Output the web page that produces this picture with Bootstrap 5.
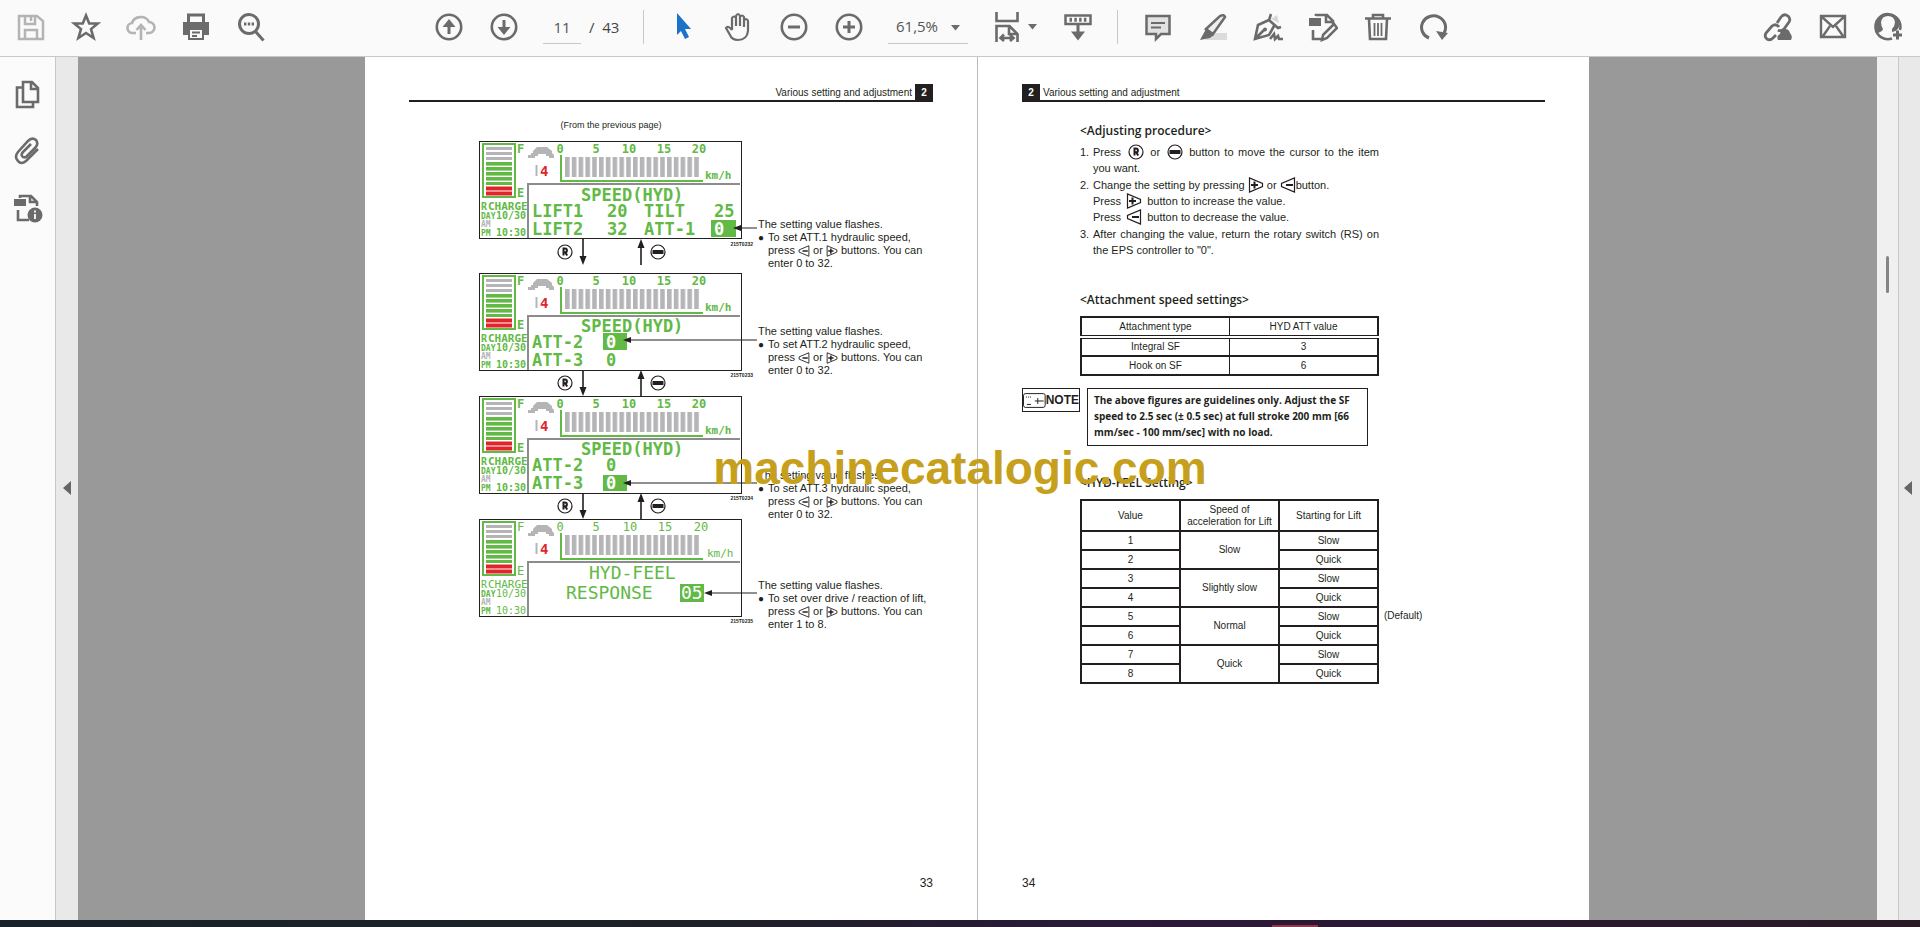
<!DOCTYPE html>
<html lang="en">
<head>
<meta charset="utf-8">
<meta name="viewport" content="width=device-width, initial-scale=1">
<title>Document viewer</title>
<link href="https://cdn.jsdelivr.net/npm/bootstrap@5.3.0/dist/css/bootstrap.min.css" rel="stylesheet">
<script src="https://cdn.jsdelivr.net/npm/bootstrap@5.3.0/dist/js/bootstrap.bundle.min.js"></script>
<style>
  :root { --ink: #231f20; --icon: #6b6b6b; --lcd: #62b946; --line: #c8c8c8; }
  body { font-family: "Liberation Sans", Arial, sans-serif; color: var(--ink); background: #fafafa; }
  .toolbar { height: 57px; background: #fafafa; border-bottom: 1px solid var(--line); padding: 0 5px 2px 3px; font-family: "Open Sans", "Noto Sans", sans-serif; font-size: 15px; color: #444; }
  .tool { width: 55px; height: 44px; padding: 0; border: 0; background: none; color: var(--icon); display: flex; align-items: center; justify-content: center; }
  .tool svg, .rail-btn svg { width: 30px; height: 30px; fill: none; stroke: currentColor; stroke-width: 3; }
  .tool.muted { color: #b4b4b4; }
  .tool.active { color: #1b72c8; }
  .tool.wide { gap: 6px; width: 60px; margin: 0 6px 0 4px; }
  .tool .caret, .zoom-box .caret { width: 9px; height: 6px; fill: var(--icon); stroke: none; }
  .middle-tools { margin-left: 143px; }
  .page-input { width: 38px; height: 34px; border: 0; border-bottom: 1px solid var(--line); background: none; text-align: center; color: #555; padding: 0; border-radius: 0; margin-left: 12px; }
  .page-total { width: 50px; }
  .bar-sep { width: 1px; height: 34px; background: var(--line); margin: 0 12px; }
  .zoom-box { width: 80px; height: 34px; border-bottom: 1px solid var(--line); margin: 0 12px; position: relative; }
  .zoom-box select { appearance: none; width: 100%; height: 100%; border: 0; background: none; padding: 0 0 0 8px; color: #555; }
  .zoom-box .caret { position: absolute; right: 8px; top: 15px; pointer-events: none; }
  .rail { width: 56px; border-right: 1px solid var(--line); background: #fbfbfb; padding-top: 8px; }
  .rail-btn { width: 55px; height: 57px; border: 0; padding: 0; background: none; color: var(--icon); }
  .strip { background: #e9e9e9; width: 22px; }
  .strip button { border: 0; padding: 0; background: none; width: 100%; height: 22px; display: flex; justify-content: center; align-items: center; margin-bottom: 2px; }
  .strip-end { border-left: 1px solid var(--line); padding-right: 3px; }
  .desk { background: #999; padding-right: 1px; }
  .sheet { width: 35%; max-width: 612px; background: #fff; padding: 26px 44px 30px; }
  .sheet + .sheet { border-left: 1px solid #bbb; }
  .sheet-head { border-bottom: 2px solid var(--ink); height: 19px; font-size: 10px; line-height: 12px; gap: 3px; }
  .sheet-head span { padding-top: 2px; }
  .sheet-head b { background: var(--ink); color: #fff; width: 18px; height: 16px; line-height: 17px; text-align: center; }
  .folio { font-size: 12px; line-height: 14px; }
  .from-prev { font-size: 9px; line-height: 12px; width: 264px; margin: 17px 0 10px 70px; }
  .flow-fig { margin-left: 70px; }
  .flow-fig > svg { width: 278px; height: 486px; display: block; }
  .callouts { margin-left: 1px; padding-top: 77px; font-size: 11px; line-height: 13px; white-space: nowrap; width: 0; }
  .callouts p { margin: 0; }
  .callouts ul { list-style: none; padding: 0 0 0 10px; margin: 0; }
  .callouts li::before { content: "●"; float: left; margin-left: -10px; font-size: 10px; }
  .callouts svg { width: 12px; height: 12px; vertical-align: -3px; }
  .call-2 { margin-top: 55px; }
  .call-3 { margin-top: 92px; }
  .call-4 { margin-top: 58px; }
  .lcd text { font-family: "DejaVu Sans Mono", monospace; fill: var(--lcd); }
  .t17 { font-size: 17px; font-weight: bold; }
  .t18 { font-size: 18px; }
  .t12 { font-size: 12px; font-weight: bold; }
  .t14 { font-size: 14px; font-weight: bold; }
  .t11 { font-size: 11px; font-weight: bold; }
  .t10 { font-size: 10px; font-weight: bold; }
  .t8 { font-size: 8px; font-weight: bold; }
  .light-lcd .t12, .light-lcd .t11, .light-lcd .t10 { font-weight: normal; }
  .lcd .red { fill: #e0252b; }
  .lcd .grey { fill: #b5b5b8; }
  .lcd .inv { fill: #fff; }
  .lcd .code { font: bold 5px "Liberation Sans", Arial, sans-serif; fill: var(--ink); text-anchor: end; }
  .content { margin-left: 58px; width: 299px; }
  .content h2 { font-family: "Open Sans", "Noto Sans", sans-serif; font-weight: 600; font-size: 12px; line-height: 16px; margin: 0; white-space: nowrap; }
  .content .h-first { margin-top: 21px; }
  .content .h-second { margin-top: 34px; }
  .content .h-third { margin-top: 29px; }
  .steps { list-style: none; padding: 0; margin: 5px 0 0; font-size: 11px; line-height: 16px; }
  .steps li { display: flex; text-align: justify; }
  .steps li + li { margin-top: 1px; }
  .steps li > span { flex: 0 0 13px; }
  .steps svg { width: 16px; height: 16px; vertical-align: -4px; margin: 0 2px; }
  .grid-table { border-collapse: collapse; width: 299px; font-size: 10px; line-height: 12px; text-align: center; table-layout: fixed; border: 2px solid var(--ink); color: var(--ink); margin-top: 8px; }
  .grid-table th, .grid-table td { border: 2px solid var(--ink); font-weight: normal; padding: 0; height: 19px; }
  .attach th, .attach td { border-left-width: 1px; border-right-width: 1px; }
  .attach thead th { border-bottom: 4px double var(--ink); height: 20px; }
  .feel thead th { height: 31px; }
  .note-row { margin-top: 12px; gap: 7px; }
  .note-tag { border: 1px solid var(--ink); width: 58px; height: 24px; }
  .note-tag svg { width: 23px; height: 15px; }
  .note-tag b { font: bold 12px "Liberation Sans Narrow", "Liberation Sans", sans-serif; }
  .note-box { border: 1px solid var(--ink); width: 281px; height: 58px; padding: 3px 6px; font: bold 10px/16px "Open Sans", "Noto Sans", sans-serif; white-space: nowrap; }
  .default-tag { position: absolute; left: 304px; top: 111px; font-size: 10px; line-height: 12px; }
  .watermark { z-index: 5; top: 441px; font-weight: bold; font-size: 46px; line-height: 54px; color: #c6a01c; white-space: nowrap; }
  .scroller { width: 21px; background: #f0f0f0; padding-top: 199px; }
  .scroller div { width: 3px; height: 37px; background: #858585; border-radius: 2px; }
  .taskbar { height: 7px; background: linear-gradient(90deg, #18222a 0, #1d2127 35%, #2b1838 60%, #2a1a26 100%); }
  .taskbar i { width: 46px; height: 2px; margin-right: 602px; background: #8c3a4c; }
</style>
</head>
<body class="d-flex flex-column vh-100 overflow-hidden">

<svg width="0" height="0" class="position-absolute" aria-hidden="true">
  <defs>
    <pattern id="segs" width="6.8" height="20" x="86" y="16" patternUnits="userSpaceOnUse"><rect width="4.6" height="20" fill="#b5b5b8"/></pattern>
    <symbol id="lcdbase" overflow="visible">
      <rect x=".5" y=".5" width="262" height="97" fill="#fff" stroke="#231f20"/>
      <rect x="4" y="3" width="32" height="53" fill="#fff" stroke="#62b946" stroke-width="2"/>
      <g fill="#b5b5b8"><rect x="7" y="6" width="26" height="3"/><rect x="7" y="11" width="26" height="3"/><rect x="7" y="16" width="26" height="3"/></g>
      <g fill="#62b946"><rect x="7" y="21" width="26" height="3.6"/><rect x="7" y="26" width="26" height="3.6"/><rect x="7" y="31" width="26" height="3.6"/><rect x="7" y="36" width="26" height="3.6"/><rect x="7" y="41" width="26" height="3"/></g>
      <g fill="#e0252b"><rect x="7" y="45.500" width="26" height="4"/><rect x="7" y="50.500" width="26" height="4"/></g>
      <path d="M54 10l4-4h10l5 4v2l2 2v3h-5v-2h-3v-2h-8v2h-3v2h-7v-3h3v-2h2z" fill="#b5b5b8"/>
      <path d="M57.500 24v11" stroke="#b5b5b8" stroke-width="2"/>
      <rect x="86" y="16" width="135" height="20" fill="url(#segs)"/>
      <path d="M82 14v26h142" fill="none" stroke="#62b946" stroke-width="2"/>
      <path d="M49 97V43h212" fill="none" stroke="#8c8c8c" stroke-width="2"/>
    </symbol>
    <symbol id="minuskey" viewBox="0 0 16 16"><path d="M14.500 1v14L1.500 9.500v-3z" fill="none" stroke="#231f20" stroke-width="1.200"/><path d="M6 8h7" stroke="#231f20" stroke-width="2"/></symbol>
    <symbol id="pluskey" viewBox="0 0 16 16"><path d="M1.500 1v14L14.500 9.500v-3z" fill="none" stroke="#231f20" stroke-width="1.200"/><path d="M3 8h7M6.500 4.500v7" stroke="#231f20" stroke-width="2"/></symbol>
    <symbol id="rkey" viewBox="0 0 16 16"><circle cx="8" cy="8" r="7" fill="#fff" stroke="#231f20" stroke-width="1.200"/><path d="M6.500 11.500v-7H8a1.800 1.800 0 0 1 0 3.800H6.500M8 8l2.200 3.500" fill="none" stroke="#231f20" stroke-width="2"/></symbol>
    <symbol id="modekey" viewBox="0 0 16 16"><circle cx="8" cy="8" r="7" fill="#fff" stroke="#231f20" stroke-width="1.200"/><path d="M2.500 8h11" stroke="#231f20" stroke-width="4"/></symbol>
    <symbol id="link-arrows" overflow="visible">
      <path d="M104 0v20M162 26V5" stroke="#231f20" stroke-width="1.600"/>
      <path d="M100.500 17h7l-3.500 9zM158.500 9h7L162 0z" fill="#231f20"/>
      <use href="#rkey" x="78" y="5" width="16" height="16"/><use href="#modekey" x="171" y="5" width="16" height="16"/>
    </symbol>
    <symbol id="caret" viewBox="0 0 9 6"><path d="M0 0h9L4.500 5.500z"/></symbol>
  </defs>
</svg>

<header class="toolbar d-flex align-items-center">
  <button class="tool muted" aria-label="Save"><svg viewBox="0 0 30 30"><path d="M3 4h18l6 5v18H3zM9 4v8h10V4M15 5v4M9 27v-9h12v9" stroke-width="2.500"/></svg></button>
  <button class="tool" aria-label="Star"><svg viewBox="0 0 30 30"><path d="M15 3.500l3.200 8h8.600l-6.800 5.600 2.600 8.900L15 21l-7.600 5 2.600-8.900-6.800-5.600h8.600z" stroke-width="2.600"/></svg></button>
  <button class="tool muted" aria-label="Upload"><svg viewBox="0 0 30 30"><path d="M10 21H7a5 5 0 0 1-1-10 9 8 0 0 1 17-1 5.500 5.500 0 0 1 0 11h-3M15 28V14M10.500 18l4.500-5 4.500 5" stroke-width="2.600"/></svg></button>
  <button class="tool" aria-label="Print"><svg viewBox="0 0 30 30"><path d="M7.500 10V3h15v7"/><path d="M3 11h24v11h-4v-5H7v5H3z" fill="currentColor" stroke-width="2"/><path d="M8 17h14v10H8zM11 20.500h8M11 24h5" fill="#fafafa" stroke-width="2"/></svg></button>
  <button class="tool" aria-label="Find"><svg viewBox="0 0 30 30"><circle cx="13" cy="12" r="9.500"/><path d="M19.500 19.500l8 9"/><path d="M8 12h10" stroke-dasharray="2.400 1.400"/></svg></button>

  <div class="middle-tools d-flex align-items-center">
    <button class="tool" aria-label="Previous page"><svg viewBox="0 0 30 30"><circle cx="15" cy="15" r="12.200" stroke-width="2.600"/><path d="M15 22V10"/><path d="M8.500 15L15 7l6.500 8z" fill="currentColor" stroke="none"/></svg></button>
    <button class="tool" aria-label="Next page"><svg viewBox="0 0 30 30"><circle cx="15" cy="15" r="12.200" stroke-width="2.600"/><path d="M15 8v12"/><path d="M8.500 15L15 23l6.500-8z" fill="currentColor" stroke="none"/></svg></button>
    <input class="page-input" type="text" value="11" aria-label="Page number">
    <span class="page-total ps-2">/&nbsp; 43</span>
    <span class="bar-sep"></span>
    <button class="tool active" aria-label="Select"><svg viewBox="0 0 30 30"><path d="M8 1l14 16h-6l4 8-4 2-4-8-4 4z" fill="currentColor" stroke="none"/></svg></button>
    <button class="tool" aria-label="Hand"><svg viewBox="0 0 30 30"><path d="M8 18V6q2-3 4 0v8M12 14V4q2-4 4 0v10M16 14V5q2-3 4 0v10M20 15V8q3-2 4 1v10q-1 9-10 9-6 0-8-5l-4-7q2-3 6 2" stroke-width="2.200"/></svg></button>
    <button class="tool" aria-label="Zoom out"><svg viewBox="0 0 30 30"><circle cx="15" cy="15" r="12.200" stroke-width="2.600"/><path d="M9 15h12"/></svg></button>
    <button class="tool" aria-label="Zoom in"><svg viewBox="0 0 30 30"><circle cx="15" cy="15" r="12.200" stroke-width="2.600"/><path d="M9 15h12M15 9v12"/></svg></button>
    <span class="zoom-box"><select aria-label="Zoom level"><option>61,5%</option></select><svg class="caret"><use href="#caret"/></svg></span>
    <button class="tool wide" aria-label="Fit width"><svg viewBox="0 0 30 30"><path d="M4.500 0v9h21V0M4.500 30V14h13l8 8v8M17 14v8h8M9 26h12M12 22.500L8.500 26l3.500 3M18 23l3.500 3-3.500 3" stroke-width="2.600"/></svg><svg class="caret"><use href="#caret"/></svg></button>
    <button class="tool" aria-label="Scrolling pages"><svg viewBox="0 0 30 30"><rect x="2.500" y="3.500" width="25" height="8.500" stroke-width="2.500"/><path d="M6.500 7.800h17" stroke-dasharray="2.500 2.300" stroke-width="4"/><path d="M15 13v9"/><path d="M8 19.500l7 9 7-9z" fill="currentColor" stroke="none"/></svg></button>
    <span class="bar-sep"></span>
    <button class="tool" aria-label="Comment"><svg viewBox="0 0 30 30"><path d="M3.500 4h23v18H18l-5 5v-5H3.500z" fill="#e2e2e2" stroke-width="2.500"/><path d="M8 11h14M8 15.500h10" stroke-width="2"/></svg></button>
    <button class="tool" aria-label="Highlight"><svg viewBox="0 0 30 30"><path d="M10 21h19v7H7z" fill="#dcdcdc" stroke="none"/><path d="M8 17L22 4q4-2 5 1l-12 17z" fill="#eee" stroke-width="2.500"/><path d="M8 17l8 6-4 3-10 2z" fill="currentColor" stroke="none"/></svg></button>
    <button class="tool" aria-label="Sign"><svg viewBox="0 0 30 30"><path d="M18 7l6-4 2 8z" fill="#d8d8d8" stroke="none"/><path d="M18 2l-2 6 9 8 3-1M16 8L5 13 2 27l14-4 5-9M3 26l8-8" stroke-width="2.600"/><circle cx="12" cy="17.500" r="2" fill="currentColor" stroke="none"/><path d="M17 27l4-5 1 5 3-3 1 3h4" stroke-width="2.600"/></svg></button>
    <button class="tool" aria-label="Fill and stamp"><svg viewBox="0 0 30 30"><path d="M8 4V3h11l6 6v3M18 3v7h6M5 18v9h9" stroke-width="2.600"/><path d="M1 6h12v8H1z" fill="currentColor" stroke="none"/><path d="M15 23L26 12l3 4-10 10-5 2z" stroke-width="2.500"/></svg></button>
    <button class="tool" aria-label="Delete"><svg viewBox="0 0 30 30"><path d="M2 6.500h26M10 6V3h10v3M6 7l1 20h16l1-20" stroke-width="2.600"/><path d="M11.500 11v13M15 11v13M18.500 11v13" stroke-width="1.800"/></svg></button>
    <button class="tool" aria-label="Rotate"><svg viewBox="0 0 30 30"><path d="M11 26A12 11.500 0 1 1 26 21"/><path d="M18 19l12 2-6 7z" fill="currentColor" stroke="none"/></svg></button>
  </div>

  <div class="ms-auto d-flex">
    <button class="tool" aria-label="Share link"><svg viewBox="0 0 30 30"><path d="M14 11l4-6q3-4 7-1 3 3 1 6l-5 7q-3 3-6 1M16 15q-3-4-7-1l-6 7q-2 4 1 6 3 2 6-1l3-3" stroke-width="2.800"/><path d="M15 28q-2-4 2-6 1-5 5-5 4 0 5 4 3 3 1 7z" fill="currentColor" stroke="none"/></svg></button>
    <button class="tool" aria-label="Mail"><svg viewBox="0 0 30 30"><path d="M3 4h24v21H3zM4 5l11 10L26 5M5 24l7-10M25 24l-7-10" stroke-width="2.400"/></svg></button>
    <button class="tool" aria-label="Account"><svg viewBox="0 0 30 30"><path d="M19 26.500A12.500 12.500 0 1 1 27 18" stroke-width="2.600"/><path d="M4 21q5-1 6-4-2-3-2-7 1-6 7-6t7 6q0 4-3 7v3q8-1 7-9 0-8-11-9Q3 3 3 14z" fill="currentColor" stroke="none"/><path d="M24.500 18.500v9M20 23h9"/></svg></button>
  </div>
</header>

<div class="d-flex flex-grow-1 overflow-hidden">
  <nav class="rail flex-shrink-0" aria-label="Panels">
    <button class="rail-btn" aria-label="Page thumbnails"><svg viewBox="0 0 30 30"><path d="M10 3h9l6 6v14H10zM18 3v7h7M9 8.500H4V28h16v-4" stroke-width="2.600"/></svg></button>
    <button class="rail-btn" aria-label="Attachments"><svg viewBox="0 0 30 30"><path d="M25 13L13 25q-5 4-8 0-4-4 0-9L15 5q4-4 8-1 3 4-1 8l-9 9q-3 1-4-1-1-2 1-4l8-8" stroke-width="2.600"/></svg></button>
    <button class="rail-btn" aria-label="Document info"><svg viewBox="0 0 30 30"><path d="M7 5V3h11l6 6v4M17 3v6h6M5 17v10h11" stroke-width="2.600"/><path d="M1 6h12v7H1z" fill="currentColor" stroke="none"/><circle cx="22" cy="22" r="7.500" fill="currentColor" stroke="none"/><path d="M22 21v5M22 17.500v2" stroke="#fff" stroke-width="1.800"/></svg></button>
  </nav>
  <div class="strip d-flex align-items-center flex-shrink-0"><button aria-label="Collapse panel"><svg width="8" height="14"><path d="M8 0v14L0 7z" fill="#666"/></svg></button></div>

  <main class="desk d-flex justify-content-center flex-grow-1">
    <section class="sheet d-flex flex-column">
      <div class="sheet-head d-flex justify-content-end align-items-center"><span>Various setting and adjustment</span><b>2</b></div>
      <p class="from-prev text-center">(From the previous page)</p>
      <div class="flow-fig d-flex">
        <svg viewBox="0 0 278 486" class="lcd" role="img" aria-label="Speed setting screens">
          <g>
            <use href="#lcdbase"/>
            <text class="t12" x="38" y="12">F</text><text class="t12" x="38" y="56">E</text>
            <text class="t14 red" x="61" y="35">4</text>
            <g class="t12" text-anchor="middle"><text x="81" y="12">0</text><text x="117" y="12">5</text><text x="150" y="12">10</text><text x="185" y="12">15</text><text x="220" y="12">20</text></g>
            <text class="t11" x="226" y="38">km/h</text>
            <text class="t10" x="2" y="69">R</text><text class="t11" x="9" y="69">CHARGE</text>
            <text class="t8" x="2" y="78">DAY</text><text class="t10" x="17" y="78">10/30</text>
            <text class="t8 grey" x="2" y="86">AM</text><text class="t8" x="2" y="95">PM</text><text class="t10" x="17" y="95">10:30</text>
            <g class="t17"><text x="102" y="60">SPEED(HYD)</text>
            <text x="53" y="76">LIFT1</text><text x="128" y="76">20</text><text x="165" y="76">TILT</text><text x="235" y="76">25</text>
            <text x="53" y="94">LIFT2</text><text x="128" y="94">32</text><text x="165" y="94">ATT-1</text>
            <rect x="232" y="79" width="25" height="17" fill="#62b946"/><text class="inv" x="235" y="94">0</text></g>
          </g>
          <g transform="translate(0 132)">
            <use href="#lcdbase"/>
            <text class="t12" x="38" y="12">F</text><text class="t12" x="38" y="56">E</text>
            <text class="t14 red" x="61" y="35">4</text>
            <g class="t12" text-anchor="middle"><text x="81" y="12">0</text><text x="117" y="12">5</text><text x="150" y="12">10</text><text x="185" y="12">15</text><text x="220" y="12">20</text></g>
            <text class="t11" x="226" y="38">km/h</text>
            <text class="t10" x="2" y="69">R</text><text class="t11" x="9" y="69">CHARGE</text>
            <text class="t8" x="2" y="78">DAY</text><text class="t10" x="17" y="78">10/30</text>
            <text class="t8 grey" x="2" y="86">AM</text><text class="t8" x="2" y="95">PM</text><text class="t10" x="17" y="95">10:30</text>
            <g class="t17"><text x="102" y="59">SPEED(HYD)</text>
            <text x="53" y="75">ATT-2</text><rect x="124" y="60" width="24" height="17" fill="#62b946"/><text class="inv" x="127" y="75">0</text>
            <text x="53" y="93">ATT-3</text><text x="127" y="93">0</text></g>
          </g>
          <g transform="translate(0 255)">
            <use href="#lcdbase"/>
            <text class="t12" x="38" y="12">F</text><text class="t12" x="38" y="56">E</text>
            <text class="t14 red" x="61" y="35">4</text>
            <g class="t12" text-anchor="middle"><text x="81" y="12">0</text><text x="117" y="12">5</text><text x="150" y="12">10</text><text x="185" y="12">15</text><text x="220" y="12">20</text></g>
            <text class="t11" x="226" y="38">km/h</text>
            <text class="t10" x="2" y="69">R</text><text class="t11" x="9" y="69">CHARGE</text>
            <text class="t8" x="2" y="78">DAY</text><text class="t10" x="17" y="78">10/30</text>
            <text class="t8 grey" x="2" y="86">AM</text><text class="t8" x="2" y="95">PM</text><text class="t10" x="17" y="95">10:30</text>
            <g class="t17"><text x="102" y="59">SPEED(HYD)</text>
            <text x="53" y="75">ATT-2</text><text x="127" y="75">0</text>
            <text x="53" y="93">ATT-3</text><rect x="124" y="79" width="24" height="16" fill="#62b946"/><text class="inv" x="127" y="93">0</text></g>
          </g>
          <g transform="translate(0 378)" class="light-lcd">
            <use href="#lcdbase"/>
            <text class="t12" x="38" y="12">F</text><text class="t12" x="38" y="56">E</text>
            <text class="t14 red" x="61" y="35">4</text>
            <g class="t12" text-anchor="middle"><text x="81" y="12">0</text><text x="117" y="12">5</text><text x="151" y="12">10</text><text x="186" y="12">15</text><text x="222" y="12">20</text></g>
            <text class="t11" x="228" y="38">km/h</text>
            <text class="t10" x="2" y="69">R</text><text class="t11" x="9" y="69">CHARGE</text>
            <text class="t8" x="2" y="78">DAY</text><text class="t10" x="17" y="78">10/30</text>
            <text class="t8 grey" x="2" y="86">AM</text><text class="t8" x="2" y="95">PM</text><text class="t10" x="17" y="95">10:30</text>
            <g class="t18"><text x="110" y="60">HYD-FEEL</text><text x="87" y="80">RESPONSE</text>
            <rect x="201" y="65" width="24" height="18" fill="#62b946"/><text class="inv" x="202" y="80">05</text></g>
          </g>
          <use href="#link-arrows" y="98"/><use href="#link-arrows" y="229"/><use href="#link-arrows" y="352"/>
          <g fill="#231f20">
            <path d="M258 87h20M148 199h130M148 342h130M229 452h49" stroke="#231f20"/>
            <path d="M254 87l8-3v6zM144 199l8-3v6zM144 342l8-3v6zM225 452l8-3v6z"/>
          </g>
          <text class="code" x="274" y="105">215T0232</text><text class="code" x="274" y="236">215T0233</text><text class="code" x="274" y="359">215T0234</text><text class="code" x="274" y="482">215T0235</text>
        </svg>
        <div class="callouts">
          <div><p>The setting value flashes.</p><ul><li>To set ATT.1 hydraulic speed,<br>press <svg><use href="#minuskey"/></svg> or <svg><use href="#pluskey"/></svg> buttons. You can<br>enter 0 to 32.</li></ul></div>
          <div class="call-2"><p>The setting value flashes.</p><ul><li>To set ATT.2 hydraulic speed,<br>press <svg><use href="#minuskey"/></svg> or <svg><use href="#pluskey"/></svg> buttons. You can<br>enter 0 to 32.</li></ul></div>
          <div class="call-3"><p>The setting value flashes.</p><ul><li>To set ATT.3 hydraulic speed,<br>press <svg><use href="#minuskey"/></svg> or <svg><use href="#pluskey"/></svg> buttons. You can<br>enter 0 to 32.</li></ul></div>
          <div class="call-4"><p>The setting value flashes.</p><ul><li>To set over drive / reaction of lift,<br>press <svg><use href="#minuskey"/></svg> or <svg><use href="#pluskey"/></svg> buttons. You can<br>enter 1 to 8.</li></ul></div>
        </div>
      </div>
      <div class="folio mt-auto text-end">33</div>
    </section>

    <section class="sheet d-flex flex-column">
      <div class="sheet-head d-flex align-items-center"><b>2</b><span>Various setting and adjustment</span></div>
      <div class="content">
        <h2 class="h-first">&lt;Adjusting procedure&gt;</h2>
        <ol class="steps">
          <li><span>1.</span><div>Press <svg><use href="#rkey"/></svg> or <svg><use href="#modekey"/></svg> button to move the cursor to the item you want.</div></li>
          <li><span>2.</span><div>Change the setting by pressing <svg class="mx-0"><use href="#pluskey"/></svg> or <svg class="mx-0"><use href="#minuskey"/></svg>button.<br>Press <svg><use href="#pluskey"/></svg> button to increase the value.<br>Press <svg><use href="#minuskey"/></svg> button to decrease the value.</div></li>
          <li><span>3.</span><div>After changing the value, return the rotary switch (RS) on the EPS controller to "0".</div></li>
        </ol>
        <h2 class="h-second">&lt;Attachment speed settings&gt;</h2>
        <table class="grid-table attach">
          <thead><tr><th>Attachment type</th><th>HYD ATT value</th></tr></thead>
          <tbody><tr><td>Integral SF</td><td>3</td></tr><tr><td>Hook on SF</td><td>6</td></tr></tbody>
        </table>
      </div>
      <div class="note-row d-flex align-items-start">
        <div class="note-tag d-flex align-items-center justify-content-center"><svg viewBox="0 0 23 15" fill="none" stroke="#231f20"><rect x=".5" y=".5" width="22" height="14" rx="2"/><path d="M3 4h5" stroke-dasharray="1 1"/><path d="M4 11.500h4M12 8h9M15 5v6"/></svg><b>NOTE</b></div>
        <div class="note-box">The above figures are guidelines only. Adjust the SF<br>speed to 2.5 sec (± 0.5 sec) at full stroke 200 mm [66<br>mm/sec - 100 mm/sec] with no load.</div>
      </div>
      <div class="content">
        <h2 class="h-third">&lt;HYD-FEEL Setting&gt;</h2>
        <div class="position-relative">
          <table class="grid-table feel">
            <thead><tr><th>Value</th><th>Speed of<br>acceleration for Lift</th><th>Starting for Lift</th></tr></thead>
            <tbody>
              <tr><td>1</td><td rowspan="2">Slow</td><td>Slow</td></tr><tr><td>2</td><td>Quick</td></tr>
              <tr><td>3</td><td rowspan="2">Slightly slow</td><td>Slow</td></tr><tr><td>4</td><td>Quick</td></tr>
              <tr><td>5</td><td rowspan="2">Normal</td><td>Slow</td></tr><tr><td>6</td><td>Quick</td></tr>
              <tr><td>7</td><td rowspan="2">Quick</td><td>Slow</td></tr><tr><td>8</td><td>Quick</td></tr>
            </tbody>
          </table>
          <span class="default-tag">(Default)</span>
        </div>
      </div>
      <div class="folio mt-auto">34</div>
    </section>
  </main>

  <div class="scroller d-flex justify-content-center flex-shrink-0"><div></div></div>
  <div class="strip strip-end d-flex align-items-center flex-shrink-0"><button aria-label="Expand tools panel"><svg width="8" height="14"><path d="M8 0v14L0 7z" fill="#666"/></svg></button></div>
</div>
<footer class="taskbar d-flex justify-content-end align-items-end flex-shrink-0"><i></i></footer>
<div class="watermark position-absolute start-50 translate-middle-x">machinecatalogic.com</div>
</body>
</html>
